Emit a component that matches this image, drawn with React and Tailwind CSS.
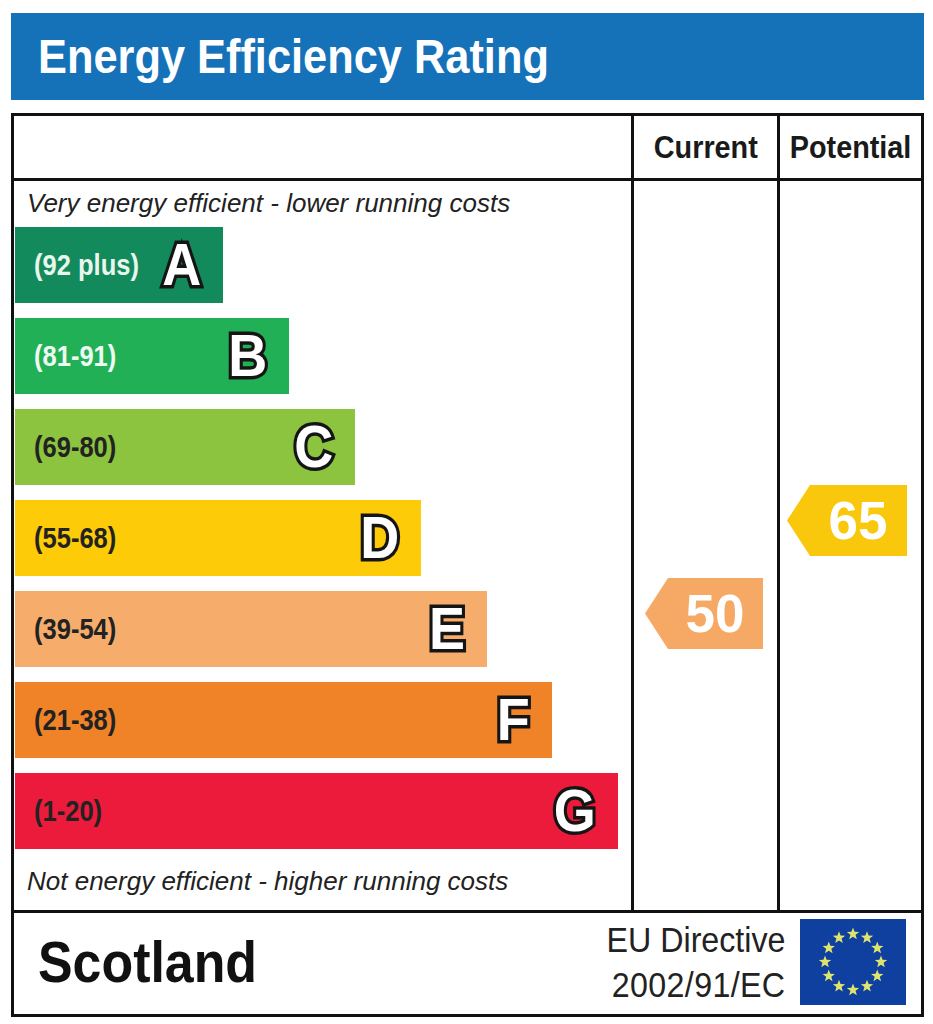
import React from "react";

const bars = [
  { letter: "A", range: "(92 plus)", width: "w-[208px]", bg: "bg-[#138a5c]", text: "text-[#e8f6ee]" },
  { letter: "B", range: "(81-91)", width: "w-[274px]", bg: "bg-[#22b057]", text: "text-[#eefaf1]" },
  { letter: "C", range: "(69-80)", width: "w-[340px]", bg: "bg-[#8cc43f]", text: "text-[#222]" },
  { letter: "D", range: "(55-68)", width: "w-[406px]", bg: "bg-[#fdcb07]", text: "text-[#222]" },
  { letter: "E", range: "(39-54)", width: "w-[472px]", bg: "bg-[#f6ad6c]", text: "text-[#222]" },
  { letter: "F", range: "(21-38)", width: "w-[537px]", bg: "bg-[#f08328]", text: "text-[#222]" },
  { letter: "G", range: "(1-20)", width: "w-[603px]", bg: "bg-[#ec1b3b]", text: "text-[#222]" },
];

const EuFlag = () => {
  // 12 stars round a circle
  const stars = [];
  for (let i = 0; i < 12; i++) {
    const a = (i / 12) * Math.PI * 2;
    const cx = 53 + Math.sin(a) * 28;
    const cy = 43 - Math.cos(a) * 28;
    const pts = [];
    for (let k = 0; k < 10; k++) {
      const r = k % 2 === 0 ? 6.5 : 2.7;
      const b = (k / 10) * Math.PI * 2;
      pts.push(`${(cx + Math.sin(b) * r).toFixed(2)},${(cy - Math.cos(b) * r).toFixed(2)}`);
    }
    stars.push(<polygon key={i} points={pts.join(" ")} fill="#dfe46e" />);
  }
  return (
    <svg width="106" height="86" viewBox="0 0 106 86">
      <rect width="106" height="86" fill="#0f3f9f" />
      {stars}
    </svg>
  );
};

const Arrow = ({ value, bg }) => (
  <div
    className={`${bg} flex h-[71px] items-center justify-center pl-[22px] [clip-path:polygon(23px_0,100%_0,100%_100%,23px_100%,0_50%)]`}
  >
    <span className="text-[53px] font-bold leading-none text-white">{value}</span>
  </div>
);

const App = () => {
  return (
    <div className="h-[1024px] w-[933px] bg-white pl-[11px] pr-[9px] pt-[13px] font-['Liberation_Sans',Arial,sans-serif] text-[#1a1a1a]">
      <div className="flex h-[87px] items-center bg-[#1572b8] pl-[27px]">
        <h1 className="inline-block origin-left scale-x-[0.885] text-[49px] font-bold leading-none text-white">
          Energy Efficiency Rating
        </h1>
      </div>

      <div className="mt-[13px] h-[904px] border-[3px] border-[#111]">
        <div className="grid h-[65px] grid-cols-[617px_146px_1fr] border-b-[3px] border-[#111]">
          <div></div>
          <div className="flex items-center justify-center border-l-[3px] border-[#111]">
            <span className="inline-block scale-x-[0.9] text-[32px] font-bold leading-none">Current</span>
          </div>
          <div className="flex items-center justify-center border-l-[3px] border-[#111]">
            <span className="inline-block scale-x-[0.9] text-[32px] font-bold leading-none">Potential</span>
          </div>
        </div>

        <div className="grid h-[732px] grid-cols-[617px_146px_1fr] border-b-[3px] border-[#111]">
          <div className="flex flex-col">
            <p className="pl-[13px] pt-[7px] text-[26px] italic leading-[30px] text-[#222]">
              Very energy efficient - lower running costs
            </p>
            <div className="mt-[9px] flex flex-col gap-[15px] pl-px">
              {bars.map((b) => (
                <div key={b.letter} className={`${b.bg} ${b.width} flex h-[76px] items-center justify-between pl-[19px] pr-[22px]`}>
                  <span className={`${b.text} inline-block origin-left scale-x-[0.88] text-[29px] font-bold leading-none`}>
                    {b.range}
                  </span>
                  <span className="inline-block origin-right scale-x-[0.9] text-[60px] font-bold leading-none text-white [-webkit-text-stroke:7px_#151515] [paint-order:stroke_fill]">
                    {b.letter}
                  </span>
                </div>
              ))}
            </div>
            <p className="pl-[13px] pt-[17px] text-[26px] italic leading-[30px] text-[#222]">
              Not energy efficient - higher running costs
            </p>
          </div>
          <div className="border-l-[3px] border-[#111] pl-[11px] pr-[14px] pt-[397px]">
            <Arrow value="50" bg="bg-[#f6a964]" />
          </div>
          <div className="border-l-[3px] border-[#111] pl-[7px] pr-[14px] pt-[304px]">
            <Arrow value="65" bg="bg-[#f9c70c]" />
          </div>
        </div>

        <div className="flex h-[98px] items-center justify-between pl-[24px] pr-[15px]">
          <span className="inline-block origin-left scale-x-[0.91] text-[57px] font-bold leading-none text-[#111]">
            Scotland
          </span>
          <div className="flex items-center gap-[15px]">
            <div className="origin-right scale-x-[0.92] text-right text-[35px] leading-[45px] text-[#222]">
              <div>EU Directive</div>
              <div className="tracking-[0.4px]">2002/91/EC</div>
            </div>
            <EuFlag />
          </div>
        </div>
      </div>
    </div>
  );
};

export default App;
